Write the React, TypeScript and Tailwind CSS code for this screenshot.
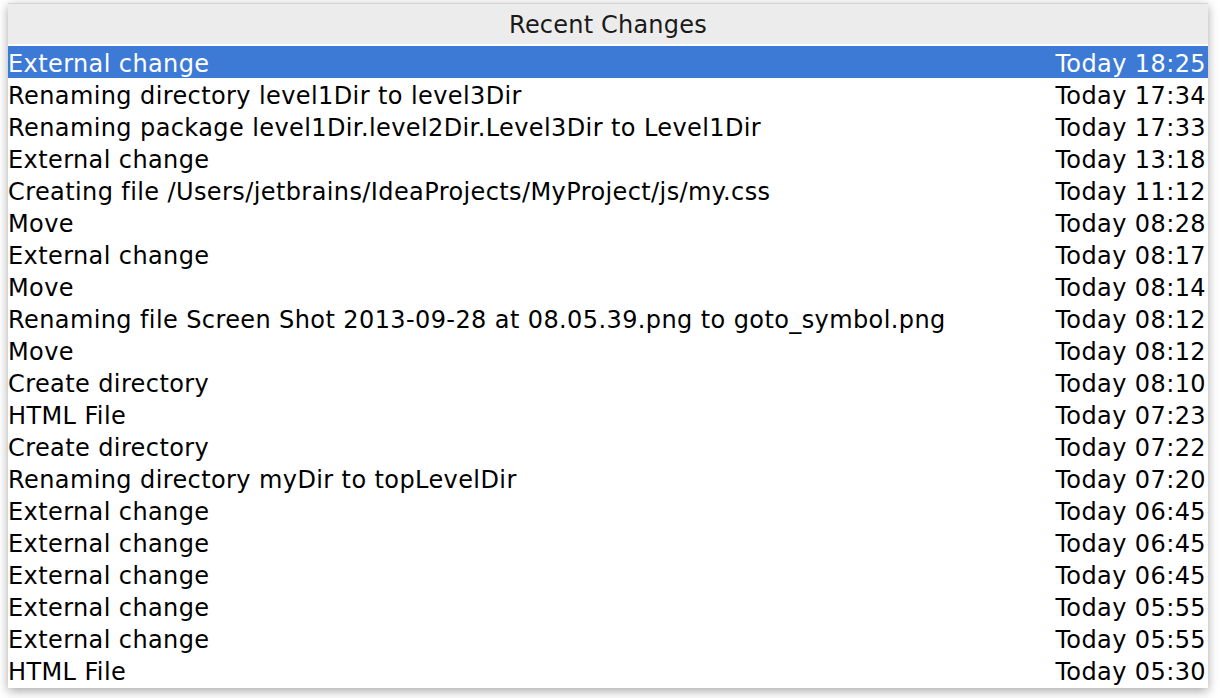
const rows: [string, string][] = [
  ['External change', 'Today 18:25'],
  ['Renaming directory level1Dir to level3Dir', 'Today 17:34'],
  ['Renaming package level1Dir.level2Dir.Level3Dir to Level1Dir', 'Today 17:33'],
  ['External change', 'Today 13:18'],
  ['Creating file /Users/jetbrains/IdeaProjects/MyProject/js/my.css', 'Today 11:12'],
  ['Move', 'Today 08:28'],
  ['External change', 'Today 08:17'],
  ['Move', 'Today 08:14'],
  ['Renaming file Screen Shot 2013-09-28 at 08.05.39.png to goto_symbol.png', 'Today 08:12'],
  ['Move', 'Today 08:12'],
  ['Create directory', 'Today 08:10'],
  ['HTML File', 'Today 07:23'],
  ['Create directory', 'Today 07:22'],
  ['Renaming directory myDir to topLevelDir', 'Today 07:20'],
  ['External change', 'Today 06:45'],
  ['External change', 'Today 06:45'],
  ['External change', 'Today 06:45'],
  ['External change', 'Today 05:55'],
  ['External change', 'Today 05:55'],
  ['HTML File', 'Today 05:30'],
];

export default function App() {
  return (
    <div
      className="w-[1228px] h-[698px] bg-white pt-[3px] pl-[8px]"
      style={{ fontFamily: '"DejaVu Sans", Verdana, sans-serif' }}
    >
      <div className="w-[1200px] bg-white border-t border-[#d4d4d4] shadow-[0_3px_10px_rgba(0,0,0,0.35)]">
        <div className="h-[41px] pt-[2px] bg-[#ececec] flex items-center justify-center text-[24px] tracking-[0.2px] text-[#1a1a1a] border-b border-white">
          Recent Changes
        </div>
        <div className="pt-px pb-[2px]">
          {rows.map(([label, time], i) => (
            <div
              key={i}
              className={`h-[32px] pt-[3px] flex items-center justify-between pr-[2px] text-[24px] leading-none tracking-[0.4px] ${
                i === 0 ? 'bg-[#3d7ad6] text-white' : 'text-black'
              }`}
            >
              <span className="whitespace-nowrap">{label}</span>
              <span className="whitespace-nowrap">{time}</span>
            </div>
          ))}
        </div>
      </div>
    </div>
  );
}
